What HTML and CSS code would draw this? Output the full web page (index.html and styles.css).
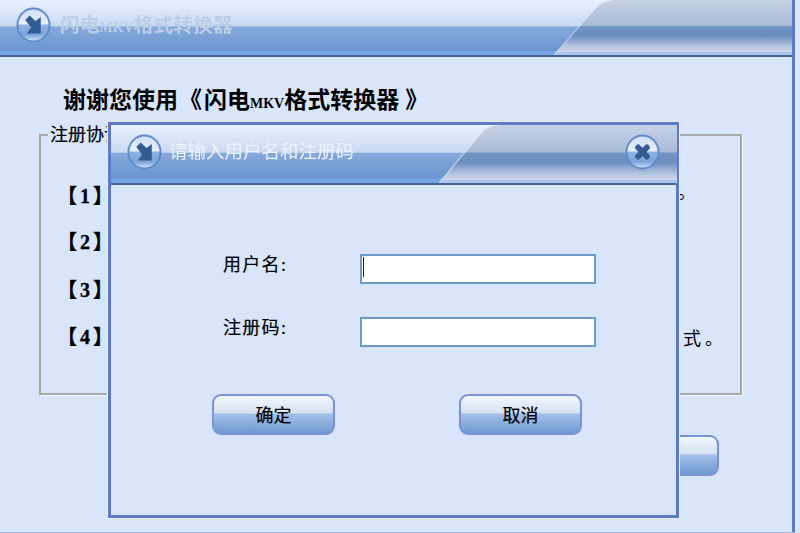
FILE: index.html
```html
<!DOCTYPE html>
<html lang="zh-CN">
<head>
<meta charset="utf-8">
<title>闪电MKV格式转换器</title>
<link rel="stylesheet" href="styles.css">
</head>
<body>
<svg class="defs" width="0" height="0" aria-hidden="true">
  <defs>
    <linearGradient id="tab" x1="0" y1="0" x2="0" y2="1">
      <stop offset="0" stop-color="#c6d2e6"/>
      <stop offset=".46" stop-color="#a9bcd8"/>
      <stop offset=".49" stop-color="#7193c4"/>
      <stop offset=".64" stop-color="#6a8dc0"/>
      <stop offset=".84" stop-color="#b4c5de"/>
      <stop offset=".94" stop-color="#cbd7ea"/>
      <stop offset=".95" stop-color="#a9c6f0"/>
      <stop offset="1" stop-color="#a9c6f0"/>
    </linearGradient>
    <linearGradient id="orb" x1="0" y1="0" x2="0" y2="1">
      <stop offset="0" stop-color="#cfdff6"/>
      <stop offset=".47" stop-color="#e6effb"/>
      <stop offset=".5" stop-color="#8fb2e2"/>
      <stop offset=".8" stop-color="#7ca5dc"/>
      <stop offset="1" stop-color="#dbe8fa"/>
    </linearGradient>
    <symbol id="tab-shape" viewBox="0 0 238 57" preserveAspectRatio="none">
      <path d="M0 57 L42 8 Q49 0 60 0 H238 V57 Z" fill="url(#tab)"/>
      <path d="M0 57 L42 8 Q49 0 60 0" fill="none" stroke="#e6eefb" stroke-width="1" opacity=".75"/>
    </symbol>
    <symbol id="orb-arrow" viewBox="0 0 36 36" preserveAspectRatio="none">
      <circle cx="18" cy="18" r="16.5" fill="url(#orb)" stroke="#5f8bcb" stroke-width="2"/>
      <path d="M9.5 13 L14 8.5 L20 14 L25.5 10 V26.5 H11 L15.5 20.5 Z" fill="#345c94"/>
    </symbol>
    <symbol id="orb-close" viewBox="0 0 36 36" preserveAspectRatio="none">
      <circle cx="18" cy="18" r="16.5" fill="url(#orb)" stroke="#5f8bcb" stroke-width="2"/>
      <path d="M13.5 13.5 L22.5 22.5 M22.5 13.5 L13.5 22.5" stroke="#345c94" stroke-width="6" stroke-linecap="round"/>
    </symbol>
  </defs>
</svg>

<div class="window">
  <header class="titlebar">
    <svg class="orb orb-main"><use href="#orb-arrow"/></svg>
    <span class="app-name">闪电<span class="mkv-sm">MKV</span>格式转换器</span>
    <svg class="tab tab-main"><use href="#tab-shape"/></svg>
  </header>

  <main class="content">
    <h1 class="headline">谢谢您使用<span class="quote-l">《</span>闪电<span class="mkv">MKV</span>格式转换器<span class="quote-r">》</span></h1>
    <fieldset class="terms">
      <legend class="terms-title">注册协议</legend>
      <div class="terms-list">
        <div class="term"><span class="num">【1】</span><span class="tail tail-a">。</span></div>
        <div class="term"><span class="num">【2】</span></div>
        <div class="term"><span class="num">【3】</span></div>
        <div class="term"><span class="num">【4】</span><span class="tail tail-b">格式。</span></div>
      </div>
    </fieldset>
    <div class="actions">
      <button class="btn" type="button">注册</button>
    </div>
  </main>
</div>

<section class="dialog">
  <header class="dialog-bar">
    <svg class="orb"><use href="#orb-arrow"/></svg>
    <span class="dialog-name">请输入用户名和注册码</span>
    <svg class="tab tab-dialog"><use href="#tab-shape"/></svg>
    <svg class="orb orb-x"><use href="#orb-close"/></svg>
  </header>
  <form class="form">
    <label class="field"><span class="field-label">用户名:</span><span class="input"><i class="caret"></i></span></label>
    <label class="field"><span class="field-label">注册码:</span><span class="input"></span></label>
    <div class="form-actions">
      <button class="btn" type="button">确定</button>
      <button class="btn" type="button">取消</button>
    </div>
  </form>
</section>
</body>
</html>
```

FILE: styles.css
```css
* { box-sizing: border-box; }
html, body { margin: 0; height: 100%; }
body {
  width: 800px;
  height: 533px;
  overflow: hidden;
  position: relative;
  background: #d8e5fb;
  font-family: "Liberation Serif", "Noto Sans CJK SC", sans-serif;
  color: #000;
  font-size: 18px;
}
.defs { position: absolute; }

.window {
  width: 795px;
  height: 532px;
  border-right: 3px solid #5f78c8;
  box-shadow: 0 1px 0 #9db6e6;
  background: #d8e5fb;
}

.titlebar, .dialog-bar {
  position: relative;
  display: flex;
  align-items: center;
  background: linear-gradient(#e9f1fe 0, #c9d9f2 47%, #86a9dc 49%, #6b96cf 92%, #76a4e8 93%, #76a4e8 100%);
}
.titlebar {
  height: 57px;
  padding: 0 0 5px 16px;
  border-bottom: 2px solid #47618a;
}
.dialog-bar {
  height: 60px;
  padding: 0 0 5px 16px;
  border-bottom: 2px solid #47618a;
}
.orb { width: 35px; height: 36px; flex: none; position: relative; z-index: 1; }
.tab { position: absolute; top: 0; width: 238px; height: 55px; }
.tab-main { left: 554px; }
.tab-dialog { left: 328px; height: 58px; }
.orb-x { position: absolute; left: 514px; top: 9px; z-index: 1; }

.app-name {
  margin: 0 0 4px 9px;
  font-size: 19.8px;
  font-weight: 700;
  color: #bccde6;
  filter: blur(.4px);
}
.mkv-sm { font-size: 14px; }
.dialog-name {
  margin: 0 0 3px 7px;
  font-size: 18.5px;
  color: #eef4fd;
  filter: blur(.25px);
}

.content { padding: 29px 50px 0 39px; }
.headline {
  margin: 0 0 0 24px;
  font-size: 23px;
  line-height: 30px;
  font-weight: 700;
  color: #000;
}
.mkv { font-size: 14px; }
.quote-l { margin: 0 2px 0 1px; }
.quote-r { margin-left: 6px; }

.terms {
  margin: 6px 0 0;
  padding: 0 0 0 21px;
  height: 270px;
  border: 2px solid #a9a9a9;
  box-shadow: 1px 1px 0 #f4f8ff;
}
.terms-title {
  margin-left: -14px;
  padding: 0 2px;
  font-size: 18px;
  line-height: 20px;
  -webkit-text-stroke: .2px #000;
}
.terms-list {
  display: grid;
  grid-template-rows: 46px 48px 47px 40px;
  padding-top: 39px;
}
.term {
  display: flex;
  justify-content: space-between;
  align-items: flex-start;
  line-height: 24px;
}
.num { font-size: 20px; font-weight: 700; margin-left: -5px; letter-spacing: 3px; -webkit-text-stroke: .3px #000; }
.tail { font-family: "Noto Sans CJK TC", sans-serif; }
.tail-a { margin-right: 50px; }
.tail-b { margin-right: 13px; letter-spacing: 4px; }

.actions { display: flex; justify-content: flex-end; margin-top: 40px; padding-right: 23px; }

.btn {
  width: 123px;
  height: 41px;
  padding: 0 0 2px;
  border: 2px solid #7b93d4;
  border-radius: 9px;
  font: inherit;
  color: #000;
  -webkit-text-stroke: .2px #000;
  background: linear-gradient(#f2f6fd 0, #d6e1f2 45%, #a3bfe8 49%, #93b4e2 65%, #6f9ad2 100%);
}

.dialog {
  position: absolute;
  left: 108px;
  top: 122px;
  width: 571px;
  height: 396px;
  border: 3px solid #5f78c8;
  background: #d8e5fb;
  box-shadow: 0 0 0 1px #e7effe;
}
.form {
  display: flex;
  flex-direction: column;
  padding: 69px 0 0 112px;
}
.field { display: flex; align-items: center; height: 30px; margin-bottom: 33px; }
.field + .field { margin-bottom: 47px; }
.field-label { width: 137px; line-height: 24px; position: relative; top: -4px; letter-spacing: 1.3px; -webkit-text-stroke: .2px #000; }
.input {
  width: 236px;
  height: 30px;
  background: #fff;
  border: 2px solid #6b9bcc;
  padding: 1px;
  display: block;
}
.caret { display: block; width: 1px; height: 20px; background: #222; }
.form-actions { display: flex; gap: 124px; margin-left: -11px; }
```
